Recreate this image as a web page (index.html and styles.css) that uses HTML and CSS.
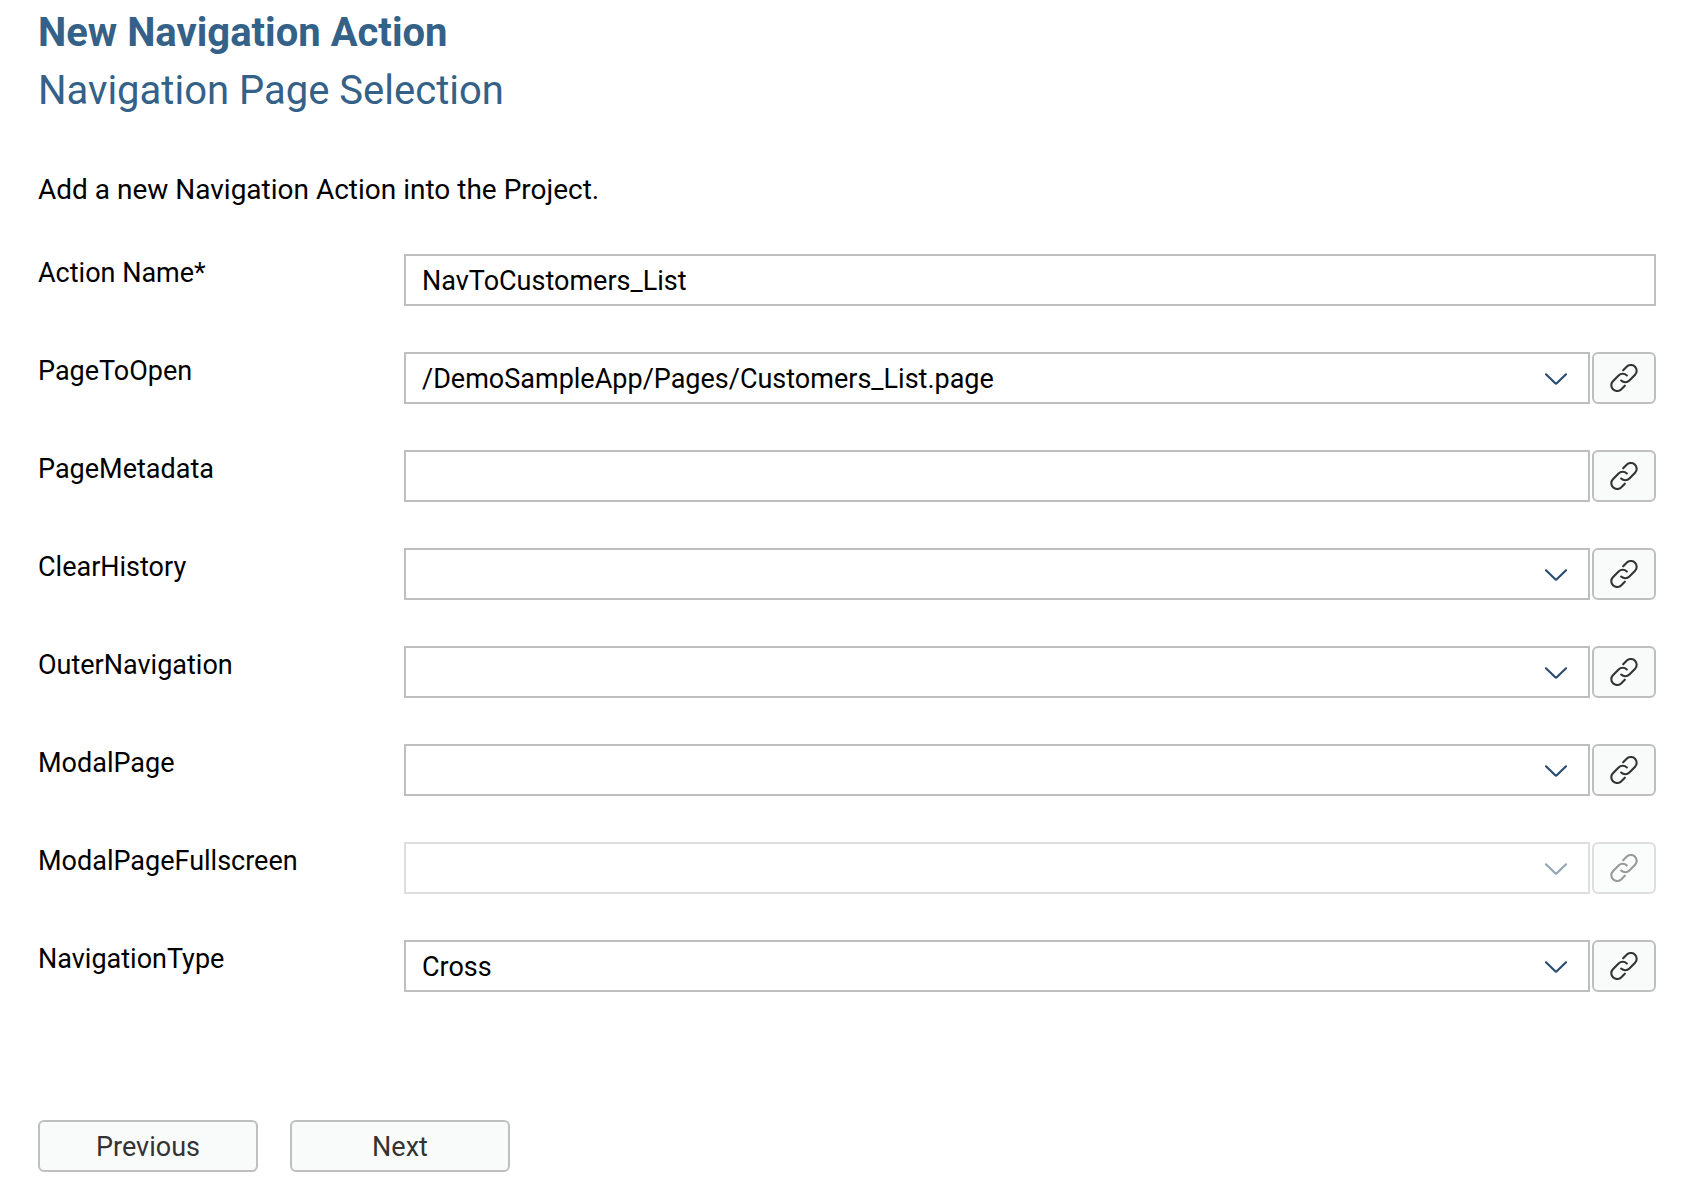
FILE: index.html
```html
<!DOCTYPE html>
<html lang="en">
<head>
<meta charset="utf-8">
<meta name="viewport" content="width=device-width, initial-scale=1">
<title>New Navigation Action</title>
<link rel="stylesheet" href="styles.css">
</head>
<body>
<svg class="sprite" aria-hidden="true">
  <symbol id="icon-chevron" viewBox="0 0 24 14">
    <path d="M2 2.3 11 11Q12 12 13 11L22 2.3" fill="none" stroke="currentColor" stroke-width="2.2" stroke-linecap="round"/>
  </symbol>
  <symbol id="icon-link" viewBox="0 0 28 28">
    <path d="M13.2 6.3 16.9 2.6A5.8 5.8 0 0 1 25.1 10.8L19.4 16.6A5.8 5.8 0 0 1 11.2 16.6M14.8 21.7 11.1 25.4A5.8 5.8 0 0 1 2.9 17.2L8.6 11.4A5.8 5.8 0 0 1 16.8 11.4" fill="none" stroke="currentColor" stroke-width="2.1" stroke-linecap="round"/>
  </symbol>
</svg>
<main class="wizard">
  <h1 class="title">New Navigation Action</h1>
  <h2 class="subtitle">Navigation Page Selection</h2>
  <p class="intro">Add a new Navigation Action into the Project.</p>
  <form class="form">
    <div class="row">
      <label class="label" for="action-name">Action Name*</label>
      <input class="field" id="action-name" type="text" value="NavToCustomers_List">
    </div>
    <div class="row">
      <label class="label" for="page-to-open">PageToOpen</label>
      <div class="control">
        <div class="combo">
          <select class="field" id="page-to-open"><option>/DemoSampleApp/Pages/Customers_List.page</option></select>
          <svg class="chevron" aria-hidden="true"><use href="#icon-chevron"/></svg>
        </div>
        <button class="button link" type="button" aria-label="Bind PageToOpen"><svg class="link-icon" aria-hidden="true"><use href="#icon-link"/></svg></button>
      </div>
    </div>
    <div class="row">
      <label class="label" for="page-metadata">PageMetadata</label>
      <div class="control">
        <input class="field" id="page-metadata" type="text">
        <button class="button link" type="button" aria-label="Bind PageMetadata"><svg class="link-icon" aria-hidden="true"><use href="#icon-link"/></svg></button>
      </div>
    </div>
    <div class="row">
      <label class="label" for="clear-history">ClearHistory</label>
      <div class="control">
        <div class="combo">
          <select class="field" id="clear-history"><option></option></select>
          <svg class="chevron" aria-hidden="true"><use href="#icon-chevron"/></svg>
        </div>
        <button class="button link" type="button" aria-label="Bind ClearHistory"><svg class="link-icon" aria-hidden="true"><use href="#icon-link"/></svg></button>
      </div>
    </div>
    <div class="row">
      <label class="label" for="outer-navigation">OuterNavigation</label>
      <div class="control">
        <div class="combo">
          <select class="field" id="outer-navigation"><option></option></select>
          <svg class="chevron" aria-hidden="true"><use href="#icon-chevron"/></svg>
        </div>
        <button class="button link" type="button" aria-label="Bind OuterNavigation"><svg class="link-icon" aria-hidden="true"><use href="#icon-link"/></svg></button>
      </div>
    </div>
    <div class="row">
      <label class="label" for="modal-page">ModalPage</label>
      <div class="control">
        <div class="combo">
          <select class="field" id="modal-page"><option></option></select>
          <svg class="chevron" aria-hidden="true"><use href="#icon-chevron"/></svg>
        </div>
        <button class="button link" type="button" aria-label="Bind ModalPage"><svg class="link-icon" aria-hidden="true"><use href="#icon-link"/></svg></button>
      </div>
    </div>
    <div class="row">
      <label class="label" for="modal-page-fullscreen">ModalPageFullscreen</label>
      <div class="control control-disabled">
        <div class="combo">
          <select class="field" id="modal-page-fullscreen" disabled><option></option></select>
          <svg class="chevron" aria-hidden="true"><use href="#icon-chevron"/></svg>
        </div>
        <button class="button link" type="button" aria-label="Bind ModalPageFullscreen" disabled><svg class="link-icon" aria-hidden="true"><use href="#icon-link"/></svg></button>
      </div>
    </div>
    <div class="row">
      <label class="label" for="navigation-type">NavigationType</label>
      <div class="control">
        <div class="combo">
          <select class="field" id="navigation-type"><option>Cross</option></select>
          <svg class="chevron" aria-hidden="true"><use href="#icon-chevron"/></svg>
        </div>
        <button class="button link" type="button" aria-label="Bind NavigationType"><svg class="link-icon" aria-hidden="true"><use href="#icon-link"/></svg></button>
      </div>
    </div>
    <div class="actions">
      <button class="button step" type="button">Previous</button>
      <button class="button step" type="button">Next</button>
    </div>
  </form>
</main>
</body>
</html>
```
FILE: styles.css
```css
* {
  box-sizing: border-box;
}

body {
  margin: 0;
  background: #fff;
  color: #000;
  font-family: Roboto, "Noto Sans", sans-serif;
  font-size: 27px;
  line-height: 32px;
}

.sprite {
  display: none;
}

.wizard {
  padding: 4px 40px 28px 38px;
}

.title,
.subtitle {
  margin: 0;
  color: #346187;
  font-size: 40px;
  line-height: 58px;
}

.subtitle {
  font-weight: 400;
}

.intro {
  margin: 54px 0 48px;
  font-size: 28px;
}

.form {
  display: flex;
  flex-direction: column;
  gap: 46px;
}

.row {
  display: grid;
  grid-template-columns: 366px minmax(0, 1fr);
}

.label {
  padding-top: 3px;
}

.control {
  display: flex;
  gap: 2px;
}

.combo {
  display: grid;
  flex: 1;
  align-items: center;
}

.combo > * {
  grid-area: 1 / 1;
}

.field {
  appearance: none;
  width: 100%;
  height: 52px;
  padding: 2px 16px 0;
  border: 2px solid #bfbfbf;
  border-radius: 0;
  background: #fff;
  color: #000;
  font: inherit;
}

.chevron {
  justify-self: end;
  width: 24px;
  height: 14px;
  margin: 2px 22px 0 0;
  color: #2b4d70;
  pointer-events: none;
}

.button {
  display: flex;
  align-items: center;
  justify-content: center;
  height: 52px;
  padding: 0;
  border: 2px solid #bfbfbf;
  border-radius: 6px;
  background: #f9fbfa;
  color: #333;
  font: inherit;
}

.link {
  flex: none;
  width: 64px;
}

.link-icon {
  width: 28px;
  height: 28px;
}

.control-disabled .field,
.control-disabled .chevron,
.control-disabled .link {
  opacity: 0.5;
}

.actions {
  display: flex;
  gap: 32px;
  padding-top: 82px;
}

.step {
  width: 220px;
  padding-top: 2px;
}
```
